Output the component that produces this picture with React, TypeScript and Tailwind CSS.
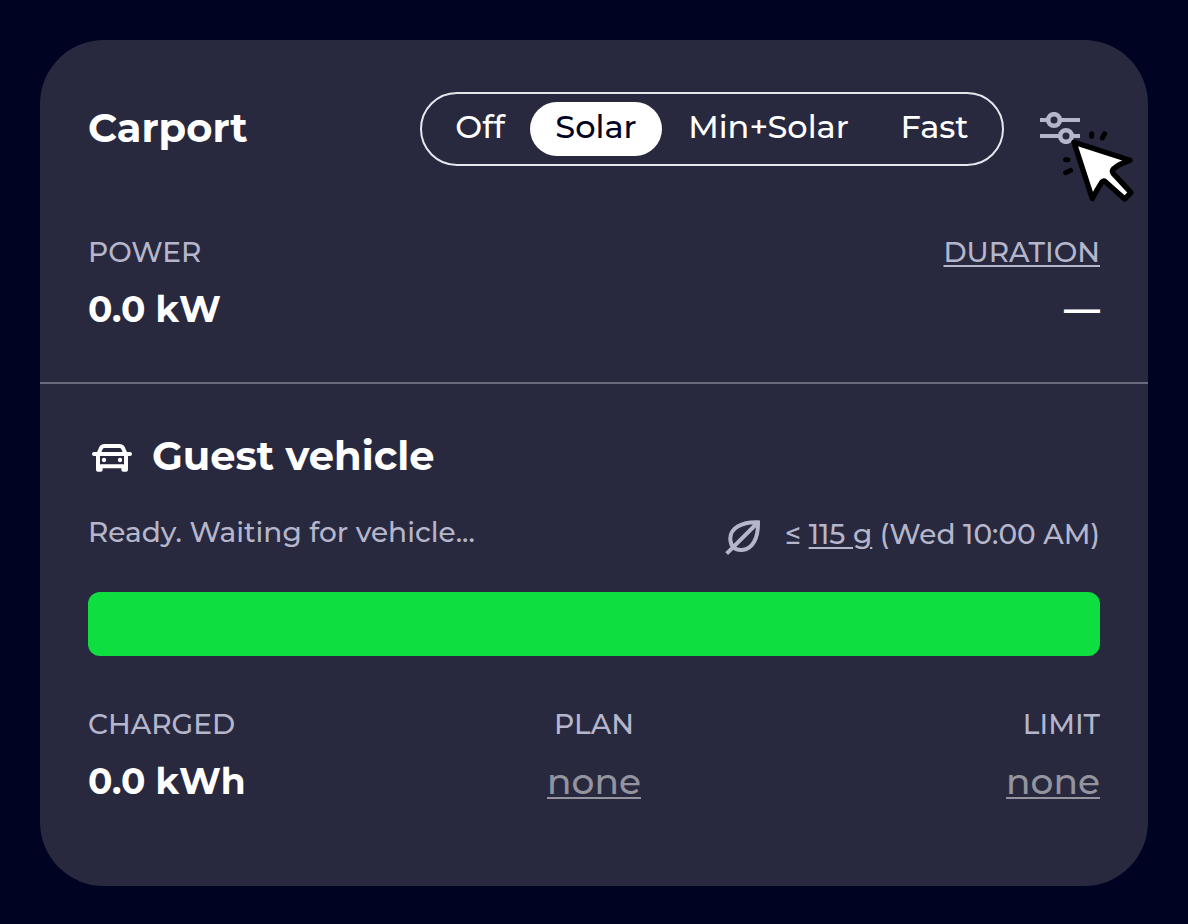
import { useState } from "react";

const modes = [
  { name: "Off", width: "w-[100px]" },
  { name: "Solar", width: "w-[132px]" },
  { name: "Min+Solar", width: "w-[213px]" },
  { name: "Fast", width: "w-[119px]" },
];

function ModeSwitch() {
  const [mode, setMode] = useState("Solar");
  return (
    <div role="group" aria-label="Charging mode" className="flex rounded-full border-2 border-[#e6e6f0] p-2">
      {modes.map(({ name, width }) => (
        <button
          key={name}
          type="button"
          aria-pressed={mode === name}
          onClick={() => setMode(name)}
          className={`${width} h-[54px] rounded-full pb-1 text-center text-[32px] leading-none font-medium ${
            mode === name ? "bg-white text-[#010322]" : "text-white"
          }`}
        >
          {name}
        </button>
      ))}
    </div>
  );
}

function SettingsIcon() {
  return (
    <svg viewBox="0 0 40 32" className="h-8 w-10" fill="none" stroke="#b5b6cc" strokeWidth="4" aria-hidden="true">
      <path d="M0 8h8M20 8h20M0 24h20M32 24h8" />
      <circle cx="14" cy="8" r="5.8" strokeWidth="4.6" />
      <circle cx="26" cy="24" r="5.8" strokeWidth="4.6" />
    </svg>
  );
}

function Pointer() {
  return (
    <svg viewBox="0 0 240 240" className="pointer-events-none absolute top-[13px] left-5 h-20 w-20 max-w-none" aria-hidden="true">
      <g stroke="#000" strokeWidth="15" strokeLinecap="round" strokeLinejoin="round">
        <path d="M95 26v8M134 26l-7 13M17 104h7M17 143l15-7" />
        <path
          fill="#fff"
          strokeWidth="16"
          d="M42 52L210 106Q178 116 160 132Q154 139 160 146L213 203L194 222L136 170Q130 165 125 172Q110 195 97 221Z"
        />
      </g>
    </svg>
  );
}

function CarIcon() {
  return (
    <svg viewBox="36 42 120 84" className="mt-1 h-7 w-10" fill="none" stroke="#fff" strokeWidth="12" strokeLinecap="round" strokeLinejoin="round" aria-hidden="true">
      <path d="M42 72H150M56 70L62 56Q65 48 74 48H118Q127 48 130 56L136 70M54 76V119H62V109H130V119H138V76" />
      <circle cx="72" cy="90" r="6.5" fill="#fff" stroke="none" />
      <circle cx="120" cy="90" r="6.5" fill="#fff" stroke="none" />
    </svg>
  );
}

function LeafIcon() {
  return (
    <svg viewBox="46 58 108 108" className="mt-2 h-9 w-9" fill="none" stroke="#b5b6cc" strokeWidth="12" aria-hidden="true">
      <path d="M145 65C98 63 60 82 62 116C63 138 75 149 97 148C130 146 146 110 145 65ZM51 159L143 67" />
    </svg>
  );
}

const label = "text-[28px] leading-10 font-medium text-[#b5b6cc]";
const value = "mt-3 text-[36px] leading-[50px] font-bold text-white";
const none = "mt-3 block text-[36px] leading-[50px] font-medium text-[#93949e] underline decoration-2 underline-offset-3";

export default function App() {
  return (
    <main className="min-h-screen bg-[#010322] px-10 pt-10 pb-[38px] font-['Montserrat','Inter',sans-serif]">
      <article className="rounded-[64px] bg-[#28293e]">
        <section className="px-12 pt-[52px] pb-12">
          <header className="flex items-center">
            <h1 className="mr-auto pb-0.5 text-[40px] leading-[48px] font-bold text-white">Carport</h1>
            <ModeSwitch />
            <div className="relative mr-5 ml-9 flex pb-0.5">
              <button type="button" aria-label="Settings">
                <SettingsIcon />
              </button>
              <Pointer />
            </div>
          </header>
          <div className="mt-[66px] flex justify-between">
            <div>
              <h2 className={label}>POWER</h2>
              <p className={value}>0.0 kW</p>
            </div>
            <div className="text-right">
              <button type="button" className={`${label} block underline decoration-2 underline-offset-3`}>
                DURATION
              </button>
              <p className={value}>—</p>
            </div>
          </div>
        </section>
        <section className="border-t-2 border-[#696a7c] px-12 pt-12 pb-20">
          <h2 className="flex items-center gap-5 pl-1 text-[40px] leading-[48px] font-bold text-white">
            <CarIcon />
            Guest vehicle
          </h2>
          <div className="mt-8 flex h-10 justify-between text-[28px] leading-10 font-medium text-[#b5b6cc]">
            <p>Ready. Waiting for vehicle...</p>
            <div className="flex items-center gap-6 pt-1">
              <LeafIcon />
              <p>
                ≤ <a href="#co2" className="underline decoration-2 underline-offset-3">115 g</a> (Wed 10:00 AM)
              </p>
            </div>
          </div>
          <div role="progressbar" aria-label="Charge" aria-valuenow={100} className="mt-10 h-16 rounded-xl bg-[#0fde41]" />
          <div className="mt-12 grid grid-cols-3">
            <div>
              <h3 className={label}>CHARGED</h3>
              <p className={value}>0.0 kWh</p>
            </div>
            <div className="flex flex-col items-center">
              <h3 className={label}>PLAN</h3>
              <button type="button" aria-label="Plan: none" className={none}>none</button>
            </div>
            <div className="flex flex-col items-end">
              <h3 className={label}>LIMIT</h3>
              <button type="button" aria-label="Limit: none" className={none}>none</button>
            </div>
          </div>
        </section>
      </article>
    </main>
  );
}
